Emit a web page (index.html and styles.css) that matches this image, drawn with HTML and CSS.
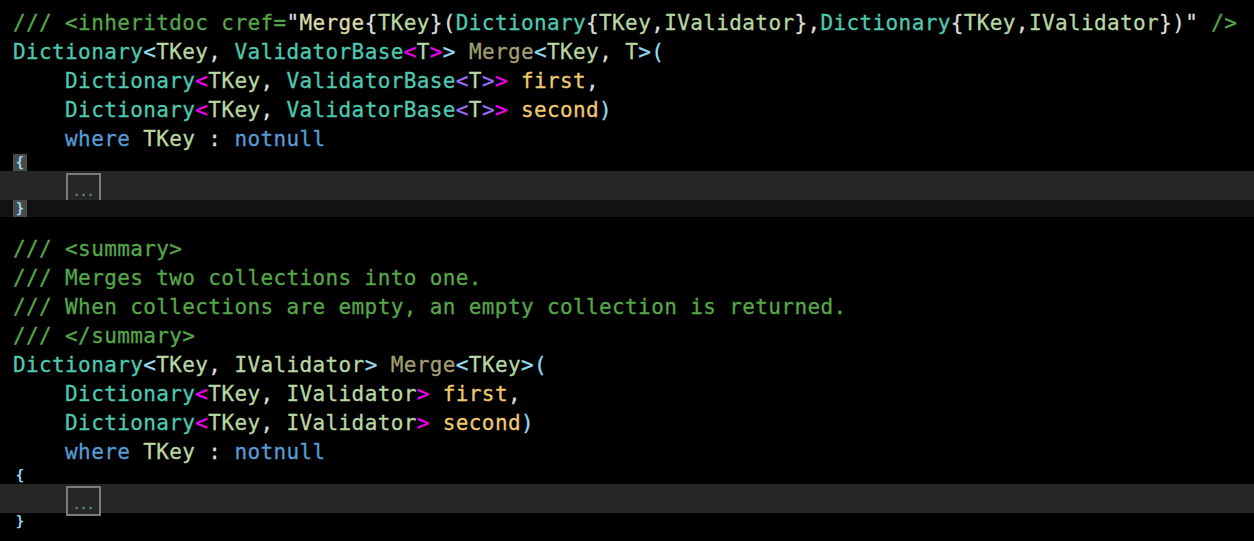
FILE: index.html
```html
<!DOCTYPE html>
<html>
<head>
<meta charset="utf-8">
<link rel="stylesheet" href="styles.css">
</head>
<body>
<div class="editor">
  <div class="row"><span class="c">/// &lt;inheritdoc cref=</span><span class="pu">"</span><span class="mc">Merge</span><span class="pu">{</span><span class="p">TKey</span><span class="pu">}(</span><span class="t">Dictionary</span><span class="pu">{</span><span class="p">TKey</span><span class="pu">,</span><span class="p">IValidator</span><span class="pu">},</span><span class="t">Dictionary</span><span class="pu">{</span><span class="p">TKey</span><span class="pu">,</span><span class="p">IValidator</span><span class="pu">})"</span><span class="c"> /&gt;</span></div>
  <div class="row"><span class="t">Dictionary</span><span class="b1">&lt;</span><span class="p">TKey</span><span class="pu">, </span><span class="t">ValidatorBase</span><span class="b2">&lt;</span><span class="p">T</span><span class="b2">&gt;</span><span class="b1">&gt;</span><span class="pu"> </span><span class="m">Merge</span><span class="b1">&lt;</span><span class="p">TKey</span><span class="pu">, </span><span class="p">T</span><span class="b1">&gt;(</span></div>
  <div class="row"><span class="pu">    </span><span class="t">Dictionary</span><span class="b2">&lt;</span><span class="p">TKey</span><span class="pu">, </span><span class="t">ValidatorBase</span><span class="b3">&lt;</span><span class="p">T</span><span class="b3">&gt;</span><span class="b2">&gt;</span><span class="pu"> </span><span class="prm">first</span><span class="pu">,</span></div>
  <div class="row"><span class="pu">    </span><span class="t">Dictionary</span><span class="b2">&lt;</span><span class="p">TKey</span><span class="pu">, </span><span class="t">ValidatorBase</span><span class="b3">&lt;</span><span class="p">T</span><span class="b3">&gt;</span><span class="b2">&gt;</span><span class="pu"> </span><span class="prm">second</span><span class="b1">)</span></div>
  <div class="row"><span class="pu">    </span><span class="k">where</span><span class="pu"> </span><span class="p">TKey</span><span class="pu"> : </span><span class="k">notnull</span></div>
  <div class="row open"><span class="brace hl">{</span></div>
  <div class="row fold"><span class="indent"></span><span class="dots">...</span></div>
  <div class="row close current"><span class="brace hl">}</span></div>
  <div class="row blank"></div>
  <div class="row"><span class="c">/// &lt;summary&gt;</span></div>
  <div class="row"><span class="c">/// Merges two collections into one.</span></div>
  <div class="row"><span class="c">/// When collections are empty, an empty collection is returned.</span></div>
  <div class="row"><span class="c">/// &lt;/summary&gt;</span></div>
  <div class="row"><span class="t">Dictionary</span><span class="b1">&lt;</span><span class="p">TKey</span><span class="pu">, </span><span class="p">IValidator</span><span class="b1">&gt;</span><span class="pu"> </span><span class="m">Merge</span><span class="b1">&lt;</span><span class="p">TKey</span><span class="b1">&gt;(</span></div>
  <div class="row"><span class="pu">    </span><span class="t">Dictionary</span><span class="b2">&lt;</span><span class="p">TKey</span><span class="pu">, </span><span class="p">IValidator</span><span class="b2">&gt;</span><span class="pu"> </span><span class="prm">first</span><span class="pu">,</span></div>
  <div class="row"><span class="pu">    </span><span class="t">Dictionary</span><span class="b2">&lt;</span><span class="p">TKey</span><span class="pu">, </span><span class="p">IValidator</span><span class="b2">&gt;</span><span class="pu"> </span><span class="prm">second</span><span class="b1">)</span></div>
  <div class="row"><span class="pu">    </span><span class="k">where</span><span class="pu"> </span><span class="p">TKey</span><span class="pu"> : </span><span class="k">notnull</span></div>
  <div class="row open"><span class="brace">{</span></div>
  <div class="row fold"><span class="indent"></span><span class="dots">...</span></div>
  <div class="row close"><span class="brace">}</span></div>
</div>
</body>
</html>
```
FILE: styles.css
```css
html, body {
  margin: 0;
  padding: 0;
  background: #000000;
}
.editor {
  display: flex;
  flex-direction: column;
  padding-top: 8px;
  font-family: "DejaVu Sans Mono", "Liberation Mono", monospace;
  font-size: 21px;
  letter-spacing: 0.38px;
  color: #dcdcdc;
  -webkit-text-stroke: 0.3px;
}
.row {
  display: block;
  height: 29px;
  line-height: 31px;
  padding-left: 13px;
  white-space: pre;
  overflow: hidden;
}
.row.open { height: 18px; line-height: 18px; }
.row.close { height: 17px; line-height: 17px; }
.row.blank { height: 17px; }
.row.fold {
  display: flex;
  align-items: flex-start;
  height: 29px;
  background: #262626;
  overflow: visible;
}
.row.current { background: #121212; }
.brace {
  display: inline-block;
  vertical-align: top;
  width: 14px;
  height: 17px;
  line-height: 17px;
  font-size: 14px;
  letter-spacing: 0;
  text-align: center;
  color: #8fdcec;
  font-weight: bold;
  -webkit-text-stroke: 0;
}
.row.open .brace { margin-top: 1px; }
.brace.hl { background: #4a4a4a; }
.indent { width: 53px; flex: none; }
.dots {
  flex: none;
  box-sizing: border-box;
  width: 35px;
  height: 30px;
  margin-top: 2px;
  border: 2px solid #7c7c7c;
  background: #262626;
  color: #5f8c8c;
  font-size: 12px;
  letter-spacing: -0.3px;
  line-height: 34px;
  text-align: center;
  font-weight: bold;
  -webkit-text-stroke: 0;
}
.c { color: #57a64a; }
.t { color: #4ec9b0; }
.p { color: #b8d7a3; }
.pu { color: #dcdcdc; }
.mc { color: #dcdcaa; }
.m { color: #a29e72; }
.k { color: #569cd6; }
.prm { color: #efc970; }
.b1 { color: #93dbef; }
.b2 { color: #f000f0; }
.b3 { color: #9b6ef3; }
```
